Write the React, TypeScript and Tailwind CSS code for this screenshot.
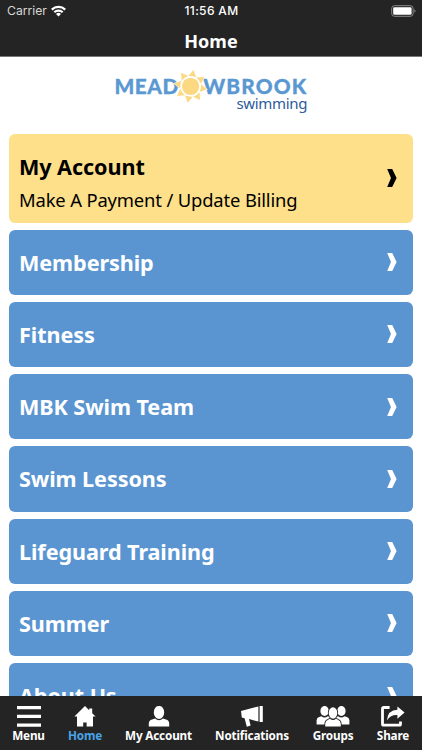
import React from 'react';

interface MenuItem {
  title: string;
  subtitle?: string;
  highlight?: boolean;
}

const MENU_ITEMS: MenuItem[] = [
  { title: 'My Account', subtitle: 'Make A Payment / Update Billing', highlight: true },
  { title: 'Membership' },
  { title: 'Fitness' },
  { title: 'MBK Swim Team' },
  { title: 'Swim Lessons' },
  { title: 'Lifeguard Training' },
  { title: 'Summer' },
  { title: 'About Us' },
];

const RAY_ANGLES = [10, 55, 100, 145, 190, 235, 280, 325];

const StatusBar: React.FC = () => (
  <div className="grid grid-cols-3 items-center h-[22px] pl-[7px] pr-[6px] font-['Inter',sans-serif]">
    <div className="flex items-center gap-[4px] text-[12.2px] leading-none text-[#d8d8d8]">
      <span>Carrier</span>
      <svg width="15" height="12" viewBox="0 0 15 12" fill="none" stroke="#fff" strokeWidth="2.2">
        <path d="M0.8 4.6a9.6 9.6 0 0 1 13.4 0" />
        <path d="M3.3 7.3a6 6 0 0 1 8.4 0" />
        <path d="M7.5 11.6L5 9a3.6 3.6 0 0 1 5 0z" fill="#fff" stroke="none" />
      </svg>
    </div>
    <div className="text-center text-[12px] leading-none font-medium tracking-[0.35px] text-white whitespace-nowrap">11:56 AM</div>
    <div className="flex justify-end">
      <svg width="25" height="12" viewBox="0 0 25 12">
        <rect x="0.7" y="0.7" width="21.4" height="10.6" rx="2.8" fill="none" stroke="#8b8b8b" />
        <rect x="2.2" y="2.2" width="18.4" height="7.6" rx="1.4" fill="#fff" />
        <path d="M23.4 4.2a2 2 0 0 1 0 3.6z" fill="#8b8b8b" />
      </svg>
    </div>
  </div>
);

const Logo: React.FC = () => (
  <svg width="215" height="60" viewBox="0 0 215 60">
    <g fill="#5b98d2" stroke="#5b98d2" strokeWidth="0.3" fontFamily="Lato, sans-serif" fontWeight="900" fontSize="20.8">
      <text x="9.4" y="34.4" textLength="64" lengthAdjust="spacing">MEAD</text>
      <text x="98.2" y="34.4" textLength="103" lengthAdjust="spacing">WBROOK</text>
    </g>
    <g transform="translate(85.6 26.4)" fill="#fbd983">
      <circle r="11" fill="#fff" />
      {RAY_ANGLES.map((angle) => (
        <path
          key={angle}
          d="M0-16.6L4-9.8Q0-11-4-9.8z"
          transform={`rotate(${angle})`}
          stroke="#fff"
          strokeWidth="1"
          paintOrder="stroke"
        />
      ))}
      <circle r="8.6" />
    </g>
    <text x="131.5" y="48.6" textLength="71" fill="#2c5c9b" fontFamily="'Noto Sans', sans-serif" fontSize="15">
      swimming
    </text>
  </svg>
);

const Chevron: React.FC = () => (
  <svg className="shrink-0" width="10" height="18" viewBox="0 0 10 18" fill="currentColor">
    <path d="M0.2 0H5.2L9.6 9L5.2 18H0.2L4 9z" />
  </svg>
);

const MenuCard: React.FC<{ item: MenuItem }> = ({ item }) => (
  <div
    className={`flex items-center justify-between shrink-0 rounded-md pl-[10px] pr-4 ${
      item.highlight ? 'h-[88.6px] bg-[#fedf8a] text-black' : 'h-[65.2px] bg-[#5a95d2] text-white'
    }`}
  >
    <div className={item.highlight ? 'pt-[11px]' : 'pt-px'}>
      <h2 className="text-[21.6px] leading-[30px] font-bold tracking-[-0.08px]">{item.title}</h2>
      {item.subtitle && <p className="mt-[3px] text-[18.4px] leading-[30px] tracking-[-0.15px]">{item.subtitle}</p>}
    </div>
    <Chevron />
  </div>
);

const TABS = [
  {
    label: 'Menu',
    width: 'w-[57px]',
    icon: (
      <svg width="24" height="21" viewBox="0 0 24 21" fill="currentColor">
        <path d="M0 0h24v3.2H0zM0 8.8h24V12H0zM0 17.6h24v3.2H0z" />
      </svg>
    ),
  },
  {
    label: 'Home',
    width: 'w-[56px]',
    active: true,
    icon: (
      <svg width="22" height="21" viewBox="0 0 22 21" fill="currentColor">
        <path d="M11 0L0.4 10.6H3V20.6H9.2V16.4h3.4v4.2H19V10.6h2.6L18.2 7.2V2.6h-3v1.6z" />
      </svg>
    ),
  },
  {
    label: 'My Account',
    width: 'w-[91px]',
    icon: (
      <svg width="22" height="21" viewBox="0 0 22 21" fill="currentColor">
        <ellipse cx="11" cy="6.4" rx="5.2" ry="6.5" />
        <path d="M0.8 20.6V17.6Q0.8 14.4 4 13.6L7 12.6Q11 16 15 12.6L18 13.6Q21.2 14.4 21.2 17.6V20.6z" />
      </svg>
    ),
  },
  {
    label: 'Notifications',
    width: 'w-[96px]',
    icon: (
      <svg width="22" height="21" viewBox="0 0 22 21" fill="currentColor">
        <path d="M0 5L17.4 0.4V15.6L8 13L9.6 19.6L5.8 20.8L3.6 12.2L0.8 11.6zM18.6 0H21.8V16H18.6z" />
      </svg>
    ),
  },
  {
    label: 'Groups',
    width: 'w-[66px]',
    icon: (
      <svg width="34" height="21" viewBox="0 0 34 21" fill="currentColor">
        <ellipse cx="8.6" cy="5" rx="4.2" ry="5" />
        <ellipse cx="25.4" cy="5" rx="4.2" ry="5" />
        <path d="M0.6 18.4V14.2Q0.8 11.6 3.2 11L5.4 10.2Q8.6 12.6 11.8 10.2L15 11V18.4zM33.4 18.4V14.2Q33.2 11.6 30.8 11L28.6 10.2Q25.4 12.6 22.2 10.2L19 11V18.4z" />
        <path
          d="M9.2 20.6V17.8Q9.4 14.6 12 13.8L14 12.8Q17 15.4 20 12.8L22 13.8Q24.6 14.6 24.8 17.8V20.6z"
          stroke="#242424"
          strokeWidth="1.6"
          paintOrder="stroke"
        />
        <ellipse cx="17" cy="7" rx="4.3" ry="5.7" stroke="#242424" strokeWidth="1.6" paintOrder="stroke" />
      </svg>
    ),
  },
  {
    label: 'Share',
    width: 'w-[54px]',
    icon: (
      <svg width="24" height="21" viewBox="0 0 24 21" fill="currentColor">
        <path
          d="M8.6 1.5H2.7Q1.5 1.5 1.5 2.7V17.9Q1.5 19.1 2.7 19.1H18.3Q19.5 19.1 19.5 17.9V15.4"
          fill="none"
          stroke="currentColor"
          strokeWidth="2.8"
        />
        <path d="M6 14.4Q6.8 4 16.4 3.8V0.4L23.6 6.6L16.4 12.8V9Q9.6 8.6 6 14.4z" />
      </svg>
    ),
  },
];

const TabBar: React.FC = () => (
  <nav className="flex shrink-0 h-[54.5px] pt-[10.5px] bg-[#242424] text-[11.7px] leading-[14px] font-bold tracking-[-0.15px]">
    {TABS.map((tab) => (
      <div key={tab.label} className={`flex flex-col items-center shrink-0 whitespace-nowrap text-white ${tab.width}`}>
        {tab.icon}
        <span className={`mt-px ${tab.active ? 'text-[#48a4e8]' : ''}`}>{tab.label}</span>
      </div>
    ))}
  </nav>
);

const App: React.FC = () => {
  return (
    <div className="flex flex-col w-[422px] h-[750px] overflow-hidden bg-white font-['Noto_Sans',sans-serif]">
      <header className="shrink-0 h-[57px] bg-[#242424] border-b border-[#777]">
        <StatusBar />
        <h1 className="text-center text-[18px] leading-[38px] font-bold text-white">Home</h1>
      </header>

      <main className="flex-1 min-h-0 overflow-hidden px-[9px]">
        <div className="flex h-[77px] pt-[3px] pl-[96px]">
          <Logo />
        </div>
        <div className="flex flex-col gap-[7.05px]">
          {MENU_ITEMS.map((item) => (
            <MenuCard key={item.title} item={item} />
          ))}
        </div>
      </main>

      <TabBar />
    </div>
  );
};

export default App;
